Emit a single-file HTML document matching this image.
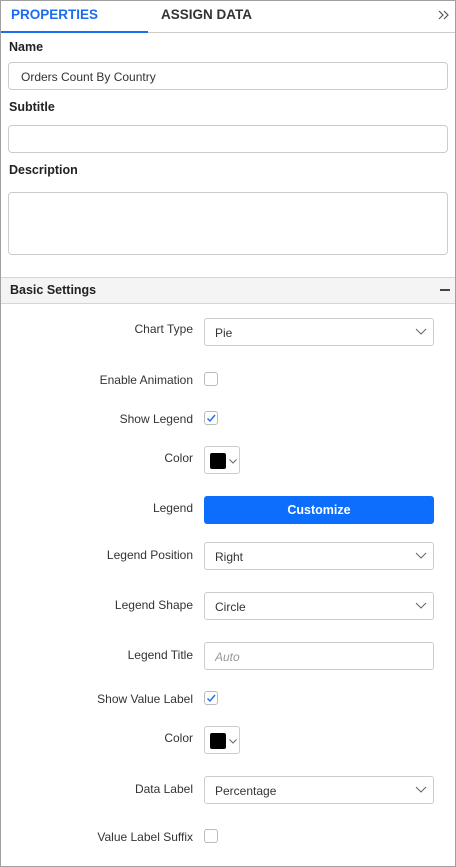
<!DOCTYPE html>
<html><head><style>
*{box-sizing:border-box;margin:0;padding:0}
body{width:456px;height:867px;position:relative;font-family:"Liberation Sans",sans-serif;font-size:12px;color:#333;background:#fff;overflow:hidden}
.frame{position:absolute;left:0;top:0;width:456px;height:867px;border:1px solid #a0a0a0}
.a{position:absolute}
.tab{font-weight:bold;font-size:13.5px;top:7px}
.lbl{font-weight:bold;font-size:12.5px;color:#222;left:9px}
.in{border:1px solid #ccc;border-radius:4px;left:8px;width:440px;background:#fff}
.rl{right:263px;text-align:right;color:#333;font-size:12px}
.dd{left:204px;width:230px;height:28px;border:1px solid #ccc;border-radius:3px;padding:7px 10px;font-size:12px;color:#333}
.dd svg{position:absolute;right:6px;top:9px}
.cb{left:204px;width:14px;height:14px;border:1px solid #bbb;border-radius:3px}
.cp{left:204px;width:36px;height:28px;border:1px solid #ccc;border-radius:3px}
.cp i{position:absolute;left:5px;top:6px;width:16px;height:16px;background:#000;border-radius:2px}
.cp svg{position:absolute;left:24px;top:12px}
</style></head><body>
<div class="frame"></div>
<div class="a tab" style="left:11px;color:#1a6cf0">PROPERTIES</div>
<div class="a tab" style="left:161px;color:#333">ASSIGN DATA</div>
<svg class="a" style="left:438px;top:10px" width="12" height="10"><path d="M1 1l4 4-4 4M6 1l4 4-4 4" stroke="#555" stroke-width="1.2" fill="none"/></svg>
<div class="a" style="left:1px;top:32px;width:454px;height:1px;background:#ccc"></div>
<div class="a" style="left:1px;top:31px;width:147px;height:2px;background:#1a6cf0"></div>

<div class="a lbl" style="top:40px">Name</div>
<div class="a in" style="top:62px;height:28px;padding:7px 12px;color:#333">Orders Count By Country</div>
<div class="a lbl" style="top:100px">Subtitle</div>
<div class="a in" style="top:125px;height:28px"></div>
<div class="a lbl" style="top:163px">Description</div>
<div class="a in" style="top:192px;height:63px"></div>

<div class="a" style="left:1px;top:277px;width:454px;height:27px;background:#f4f4f4;border-top:1px solid #d6d6d6;border-bottom:1px solid #d6d6d6"></div>
<div class="a" style="left:10px;top:283px;font-weight:bold;font-size:12.5px;color:#222">Basic Settings</div>
<div class="a" style="left:440px;top:289px;width:10px;height:1.5px;background:#444"></div>

<div class="a rl" style="top:322px">Chart Type</div>
<div class="a dd" style="top:318px">Pie<svg width="12" height="8"><path d="M1 1l5 5 5-5" stroke="#666" fill="none"/></svg></div>
<div class="a rl" style="top:373px">Enable Animation</div>
<div class="a cb" style="top:372px"></div>
<div class="a rl" style="top:412px">Show Legend</div>
<div class="a cb" style="top:411px"><svg width="12" height="12" style="position:absolute;left:0;top:0"><path d="M2.5 6.5l2.5 2.5 5-6" stroke="#1a6cf0" stroke-width="1.4" fill="none"/></svg></div>
<div class="a rl" style="top:451px">Color</div>
<div class="a cp" style="top:446px"><i></i><svg width="8" height="5"><path d="M.5.5l3.5 3.5 3.5-3.5" stroke="#666" fill="none"/></svg></div>
<div class="a rl" style="top:501px">Legend</div>
<div class="a" style="left:204px;top:496px;width:230px;height:28px;background:#0d6efd;border-radius:3px;color:#fff;font-weight:bold;font-size:12.5px;text-align:center;line-height:28px">Customize</div>
<div class="a rl" style="top:548px">Legend Position</div>
<div class="a dd" style="top:542px">Right<svg width="12" height="8"><path d="M1 1l5 5 5-5" stroke="#666" fill="none"/></svg></div>
<div class="a rl" style="top:598px">Legend Shape</div>
<div class="a dd" style="top:592px">Circle<svg width="12" height="8"><path d="M1 1l5 5 5-5" stroke="#666" fill="none"/></svg></div>
<div class="a rl" style="top:648px">Legend Title</div>
<div class="a dd" style="top:642px;color:#999;font-style:italic">Auto</div>
<div class="a rl" style="top:692px">Show Value Label</div>
<div class="a cb" style="top:691px"><svg width="12" height="12" style="position:absolute;left:0;top:0"><path d="M2.5 6.5l2.5 2.5 5-6" stroke="#1a6cf0" stroke-width="1.4" fill="none"/></svg></div>
<div class="a rl" style="top:731px">Color</div>
<div class="a cp" style="top:726px"><i></i><svg width="8" height="5"><path d="M.5.5l3.5 3.5 3.5-3.5" stroke="#666" fill="none"/></svg></div>
<div class="a rl" style="top:782px">Data Label</div>
<div class="a dd" style="top:776px">Percentage<svg width="12" height="8"><path d="M1 1l5 5 5-5" stroke="#666" fill="none"/></svg></div>
<div class="a rl" style="top:830px">Value Label Suffix</div>
<div class="a cb" style="top:829px"></div>
</body></html>
